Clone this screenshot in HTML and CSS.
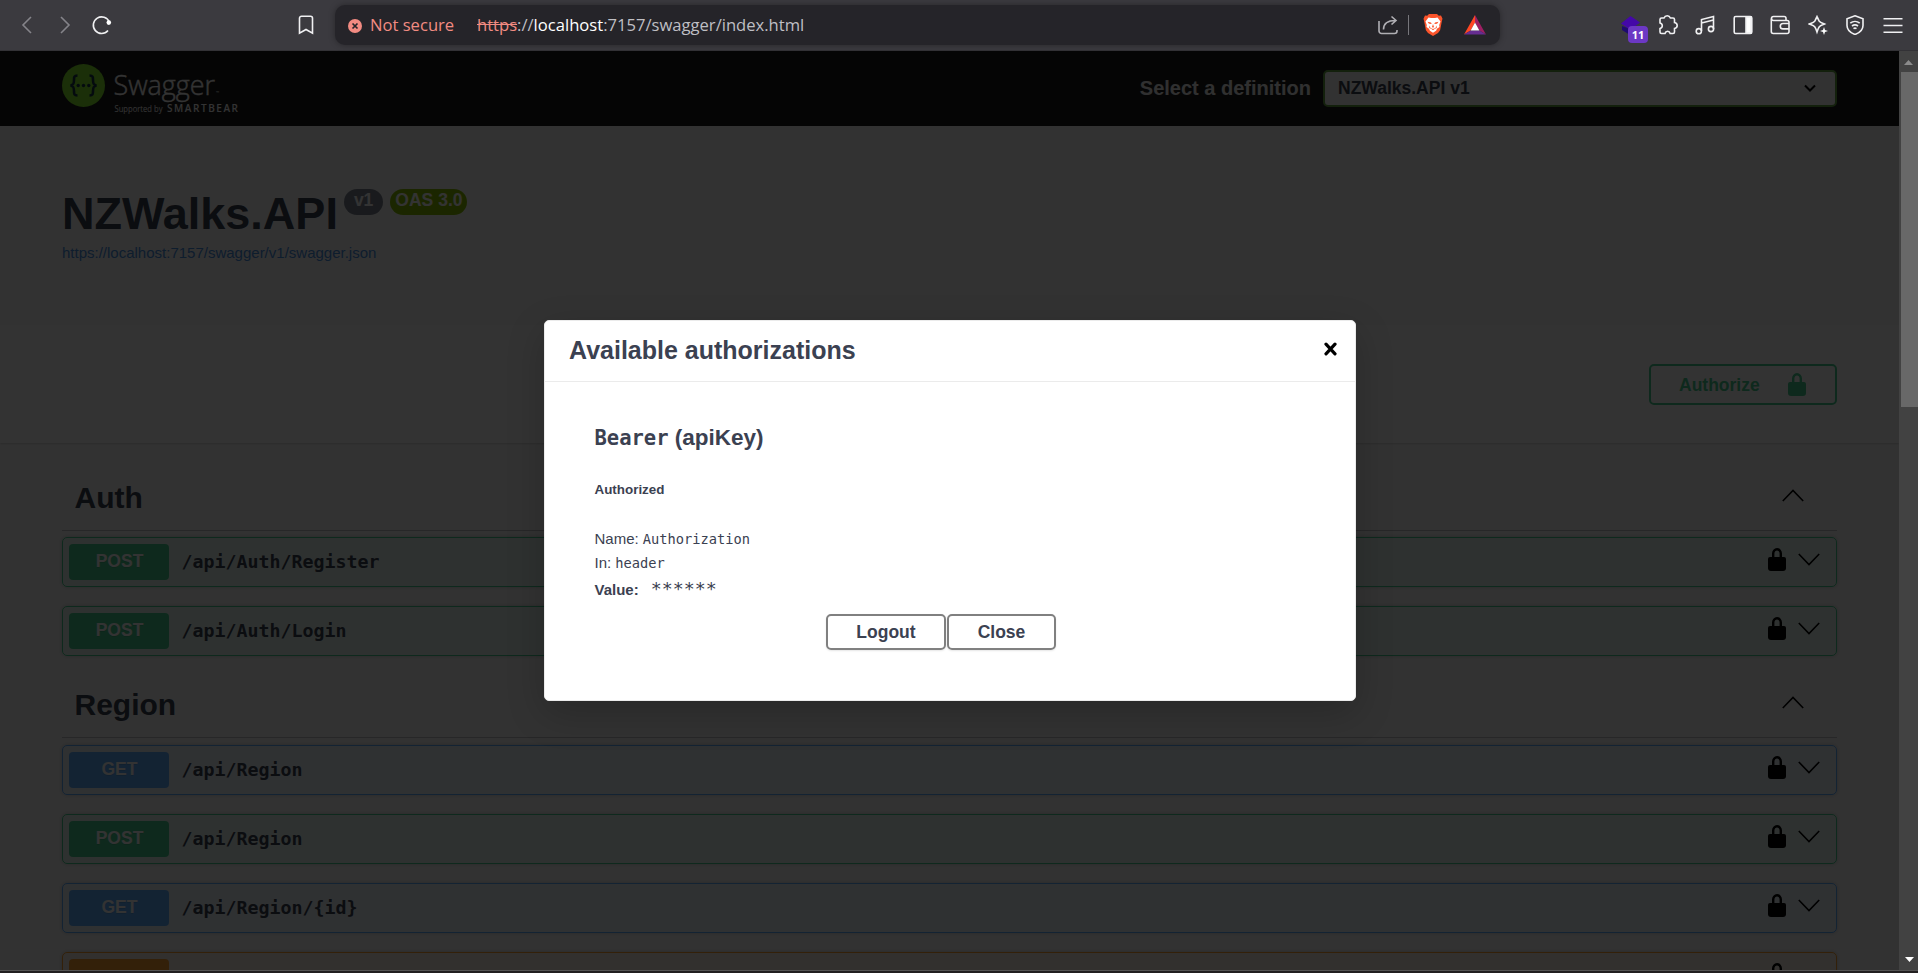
FILE: index.html
```html
<!DOCTYPE html>
<html lang="en">
<head>
<meta charset="utf-8">
<title>Swagger UI</title>
<link rel="stylesheet" href="styles.css">
</head>
<body>
<svg class="defs" width="0" height="0" aria-hidden="true">
  <symbol id="lock" viewBox="0 0 18 23"><path d="M2 9h14a2 2 0 0 1 2 2v9a3 3 0 0 1-3 3H3a3 3 0 0 1-3-3v-9a2 2 0 0 1 2-2z"/><path d="M5.2 9.500V5.500a3.800 4.300 0 0 1 7.600 0v4" fill="none" stroke="currentColor" stroke-width="2.400"/></symbol>
  <symbol id="down" viewBox="0 0 22 13"><path d="M.8 1 11 11.500 21.200 1" fill="none" stroke="currentColor" stroke-width="1.600"/></symbol>
  <symbol id="up" viewBox="0 0 22 13"><path d="M.8 12 11 1.500 21.200 12" fill="none" stroke="currentColor" stroke-width="1.600"/></symbol>
</svg>
<div class="browser">
  <header class="toolbar">
    <div class="nav">
      <svg class="dim" width="12" height="20" viewBox="0 0 12 20"><path d="M10 2 2 10l8 8"/></svg>
      <svg class="dim" width="12" height="20" viewBox="0 0 12 20"><path d="M2 2l8 8-8 8"/></svg>
      <svg width="20" height="20" viewBox="0 0 20 20"><path d="M16 15.500A8.300 8.300 0 1 1 17.300 7"/><circle cx="16.800" cy="7.600" r="2.300" fill="#fff" stroke="none"/></svg>
    </div>
    <svg class="bookmark" width="16" height="20" viewBox="0 0 16 20"><path d="M3.500 1.200h9a2 2 0 0 1 2 2V18.200L8 14.500l-6.500 3.700V3.200a2 2 0 0 1 2-2z"/></svg>
    <div class="address">
      <svg class="warn" width="14" height="14" viewBox="0 0 14 14"><circle cx="7" cy="7" r="7" fill="#f28b82"/><path d="M4.500 4.500l5 5m0-5l-5 5" stroke="#26252a" stroke-width="1.700"/></svg>
      <span class="insecure">Not secure</span>
      <span class="url"><s>https</s>://<b>localhost</b>:7157/swagger/index.html</span>
      <div class="address-tools">
        <svg class="share" width="20" height="20" viewBox="0 0 20 20"><path d="M1 6v10a2.500 2.500 0 0 0 2.500 2.500h13A2.500 2.500 0 0 0 19 16v-1M5.500 14.500c0-6 4-9 12-9M13.500 1.500l4.500 4-4.500 4"/></svg>
        <i class="sep"></i>
        <svg class="brave" width="20" height="24" viewBox="0 0 20 24"><path d="M6 1h8l1.800 1.700L18 2.500l1.500 3.200-.6 2.300-1.800 9.200L15 20l-5 3-5-3-2.100-2.800L1.100 8 .5 5.700 2 2.500l2.200.2z" fill="#fb542b"/><path d="M5.500 4.500 8 5h4l2.500-.5 3 4-1.300 3.500.3 2-2.500 1.700-.9 2L10 19.800l-3.100-2.100-.9-2L3.500 14l.3-2L2.500 8.500z" fill="#fff"/><path d="M4.500 8.800l3.500.6.7 1.700-2.700-.3zM15.500 8.800l-3.500.6-.7 1.700 2.700-.3zM10 11l1 3-1 .8-1-.8zM6.500 12.500l1 2.500L10 16l2.500-1 1-2.500.3 2.500-2.300 1-1.500 1.300L8.500 16l-2.300-1z" fill="#fb542b"/></svg>
        <svg class="bat" width="22" height="20" viewBox="0 0 22 20"><path d="M11 0 0 19.500l6.600-4L11 7.500z" fill="#ff4724"/><path d="M11 0v7.500l4.400 8 6.600 4z" fill="#9e1f63"/><path d="M0 19.500h22l-6.600-4H6.600z" fill="#662d91"/><path d="M11 7.500l-4.400 8h8.800z" fill="#fff"/></svg>
      </div>
    </div>
    <div class="actions">
      <div class="extension">
        <svg width="22" height="22" viewBox="0 0 22 22"><path d="M2 11v4l8 5V14z" fill="#1e0a70" stroke="none"/><path d="M10.500 1 20 7.500 10.500 15 1 8.500z" fill="#4408a8" stroke="none"/></svg>
        <span class="count">11</span>
      </div>
      <svg width="20" height="20" viewBox="0 0 20 20"><path d="M3.500 3H6c.6-1.500 1.800-2.200 3.200-2.200S11.800 1.500 12.400 3H15a1.500 1.500 0 0 1 1.500 1.500v3c1.700.4 2.700 1.500 2.700 3s-1 2.700-2.700 3V17a1.500 1.500 0 0 1-1.500 1.500h-2.800c-.4-1.500-1.300-2.200-2.600-2.200S7.400 17 7 18.500H3.500A1.500 1.500 0 0 1 2 17v-3.500c1.500-.4 2.300-1.300 2.300-2.700S3.500 8.400 2 8V4.500A1.500 1.500 0 0 1 3.500 3z"/></svg>
      <svg width="20" height="20" viewBox="0 0 20 20"><circle cx="3.800" cy="16.200" r="2.600"/><circle cx="16" cy="14" r="2.600"/><path d="M6.500 16V4.500l12-3V14M6.500 8l12-3"/></svg>
      <svg width="20" height="20" viewBox="0 0 20 20"><rect x="1.200" y="1.500" width="17.600" height="17" rx="1.500"/><path d="M13 2h5v16h-5z" fill="#fff"/></svg>
      <svg width="20" height="20" viewBox="0 0 20 20"><path d="M16 5.500V3.300a1.800 1.800 0 0 0-1.800-1.800H3.500a2 2 0 0 0 0 4h13.700A1.800 1.800 0 0 1 19 7.300v9.400a1.800 1.800 0 0 1-1.800 1.800H3.300a2 2 0 0 1-2-2V3.500M19 8.500h-6a2.700 2.700 0 0 0 0 5.400h6"/></svg>
      <svg width="20" height="20" viewBox="0 0 20 20"><path d="M9 1.500c.5 1 1.200 3.200 2.300 4.700 1.200 1.300 3.500 2 5.200 2.800-1.700.8-4 1.500-5.200 2.800C10.200 13.300 9.500 15.500 9 17c-.5-1.500-1.200-3.700-2.300-5.200C5.500 10.500 3 9.800 1.200 9 3 8.200 5.500 7.500 6.700 6.200 7.800 4.700 8.500 2.500 9 1.500z"/><path d="M16 12l1 3 3 1-3 1-1 3-1-3-3-1 3-1z" fill="#fff" stroke="none"/></svg>
      <svg width="20" height="20" viewBox="-1 0 20 20"><path d="M9 .8l8 3v6.700c0 4.500-4 7.500-8 9-4-1.500-8-4.500-8-9V3.800z"/><path d="M4.300 8.200c2.700-2.200 6.700-2.200 9.400 0M6 11c1.800-1.400 4.200-1.400 6 0M7.500 13.600c1-.7 2-.7 3 0"/></svg>
      <svg width="20" height="20" viewBox="0 0 20 20"><path d="M.5 3.800h19M.5 10.500h19M.5 17.200h19"/></svg>
    </div>
  </header>

  <div class="viewport">
    <main class="page">
      <div class="topbar">
        <svg class="logo" width="180" height="52" viewBox="0 0 180 52">
          <circle cx="21.500" cy="21.500" r="21.500" fill="#85ea2d"/>
          <g fill="none" stroke="#173647" stroke-width="2.600"><path d="M15.500 11.500c-3.500 0-3.500 1.500-3.500 4.500 0 3.500-.5 5-3.500 5.500 3 .5 3.500 2 3.500 5.500 0 3 0 4.500 3.500 4.500M27.500 11.500c3.500 0 3.500 1.500 3.500 4.500 0 3.500.5 5 3.500 5.500-3 .5-3.500 2-3.500 5.500 0 3 0 4.500-3.500 4.500"/></g>
          <g fill="#173647"><circle cx="16.200" cy="21.500" r="1.700"/><circle cx="21.500" cy="21.500" r="1.700"/><circle cx="26.800" cy="21.500" r="1.700"/></g>
          <text class="logo-name" x="51.500" y="30.500" textLength="101.500" lengthAdjust="spacingAndGlyphs">Swagger</text>
          <text class="logo-tm" x="154" y="30">™</text>
          <text class="logo-by" x="52.500" y="48" textLength="48" lengthAdjust="spacingAndGlyphs">Supported by</text>
          <text class="logo-co" x="105" y="48" textLength="71">SMARTBEAR</text>
        </svg>
        <label class="definition"><span>Select a definition</span>
          <span class="select">NZWalks.API v1<svg width="12" height="9" viewBox="0 0 12 9"><path d="M1 1.500l5 5 5-5" fill="none" stroke="#000" stroke-width="2"/></svg></span>
        </label>
      </div>
      <section class="info">
        <h1>NZWalks.API<span class="badges"><span class="badge">v1</span><span class="badge oas">OAS 3.0</span></span></h1>
        <a class="spec">https://localhost:7157/swagger/v1/swagger.json</a>
      </section>
      <section class="scheme">
        <div class="authorize"><span>Authorize</span><svg width="18" height="23"><use href="#lock"/></svg></div>
      </section>
      <section class="tag">
        <h2>Auth<svg width="22" height="13"><use href="#up"/></svg></h2>
        <div class="op post"><span class="method">POST</span><code>/api/Auth/Register</code><svg class="lock" width="18" height="23"><use href="#lock"/></svg><svg class="arrow" width="22" height="13"><use href="#down"/></svg></div>
        <div class="op post"><span class="method">POST</span><code>/api/Auth/Login</code><svg class="lock" width="18" height="23"><use href="#lock"/></svg><svg class="arrow" width="22" height="13"><use href="#down"/></svg></div>
      </section>
      <section class="tag">
        <h2>Region<svg width="22" height="13"><use href="#up"/></svg></h2>
        <div class="op get"><span class="method">GET</span><code>/api/Region</code><svg class="lock" width="18" height="23"><use href="#lock"/></svg><svg class="arrow" width="22" height="13"><use href="#down"/></svg></div>
        <div class="op post"><span class="method">POST</span><code>/api/Region</code><svg class="lock" width="18" height="23"><use href="#lock"/></svg><svg class="arrow" width="22" height="13"><use href="#down"/></svg></div>
        <div class="op get"><span class="method">GET</span><code>/api/Region/{id}</code><svg class="lock" width="18" height="23"><use href="#lock"/></svg><svg class="arrow" width="22" height="13"><use href="#down"/></svg></div>
        <div class="op put"><span class="method"></span><svg class="lock" width="18" height="23"><use href="#lock"/></svg></div>
      </section>

      <div class="backdrop">
        <div class="modal">
          <div class="modal-head"><h3>Available authorizations</h3>
            <svg width="13" height="14" viewBox="0 0 13 14"><path d="M2 2.200l9 9.600M11 2.200l-9 9.600" stroke="#000" stroke-width="3.200" stroke-linecap="round"/></svg>
          </div>
          <div class="modal-body">
            <h4><code>Bearer</code> (apiKey)</h4>
            <h6>Authorized</h6>
            <p>Name: <code>Authorization</code></p>
            <p>In: <code>header</code></p>
            <p class="value"><b>Value:</b><code>******</code></p>
            <div class="buttons"><span class="btn logout">Logout</span><span class="btn close">Close</span></div>
          </div>
        </div>
      </div>
    </main>
    <div class="scrollbar">
      <svg width="9" height="5" viewBox="0 0 9 5"><path d="M0 5 4.500 0 9 5z" fill="#8b8b8b"/></svg>
      <i class="thumb"></i>
      <svg class="end" width="9" height="5" viewBox="0 0 9 5"><path d="M0 0l4.500 5L9 0z" fill="#fff"/></svg>
    </div>
  </div>
  <div class="edge"></div>
</div>
</body>
</html>
```
FILE: styles.css
```css
* { box-sizing: border-box; }
body { margin: 0; font-family: "Liberation Sans", Arial, sans-serif; color: #3b4151; overflow: hidden; }
h1, h2, h3, h4, h6, p { margin: 0; }
svg { display: block; flex: none; }
.defs { position: absolute; }
.browser { width: 1918px; height: 973px; display: flex; flex-direction: column; }

/* Browser toolbar */
.toolbar { height: 51px; flex: none; display: flex; background: #3b3a3f; border-bottom: 1px solid #333236; padding: 0 15.500px 0 22px; }
.toolbar svg { fill: none; stroke: #f0f0f2; stroke-width: 1.6; }
.nav { display: flex; gap: 26px; padding-top: 15px; width: 276px; }
.nav svg:first-child { margin-left: -1px; }
.nav svg:last-child { margin-left: -5px; }
.toolbar .dim { stroke: #85848a; }
.bookmark { margin-top: 15px; }
.address { width: 1165px; height: 40px; margin: 5px 0 0 21px; padding: 0 14px 0 13px; display: flex; flex: none; align-items: center; background: #252429; border-radius: 10px; box-shadow: 0 0 6px rgba(0,0,0,.35); font: 16.600px/40px "Open Sans", "Noto Sans", sans-serif; white-space: nowrap; }
.toolbar .warn { stroke: none; margin-top: 1px; }
.insecure { color: #f28b82; margin-left: 8px; width: 107px; }
.url { color: #bfbfc4; }
.url b { color: #fff; font-weight: 400; }
.url s { color: #f28b82; }
.address-tools { display: flex; align-items: center; margin-left: auto; }
.toolbar .share { stroke: #b0afb4; }
.sep { width: 1.500px; height: 20px; margin: 0 14px 0 10px; background: #77767b; }
.toolbar .brave, .toolbar .bat { stroke: none; }
.bat { margin-left: 21px; }
.actions { display: flex; margin-left: auto; gap: 17.500px; padding-top: 15px; }
.extension { position: relative; width: 22px; margin-right: -2px; }
.count { position: absolute; left: 8px; top: 11px; width: 20px; height: 17px; border-radius: 4px; background: #6c38c4; color: #fff; font: bold 11px/18px "Open Sans", sans-serif; text-align: center; }

/* Page */
.viewport { height: 919px; display: flex; position: relative; overflow: hidden; }
.page { width: 1899px; height: 919px; background: #fafafa; position: relative; overflow: hidden; }
.edge { height: 3px; background: #221f20; border-top: 1px solid #545353; }
.topbar { height: 75px; background: #1b1b1b; padding: 0 62px; display: flex; justify-content: space-between; }
.logo { margin-top: 13px; }
.logo text { fill: #fff; font-family: "Open Sans", sans-serif; }
.logo .logo-name { font-size: 27px; font-weight: 300; stroke: #fff; stroke-width: .4; }
.logo .logo-tm { font-size: 4px; }
.logo .logo-by { font-size: 8.500px; }
.logo .logo-co { font-size: 10px; font-weight: 600; }
.definition { display: flex; align-items: center; gap: 12px; color: #f0f0f0; font: bold 20px/37px "Liberation Sans", sans-serif; }
.select { width: 514px; height: 37px; border: 2.500px solid #62a03f; border-radius: 5px; background: #f7f7f7; color: #3b4151; font-size: 17.500px; line-height: 31px; padding: 0 19px 0 13px; display: flex; justify-content: space-between; align-items: center; }
.info { height: 199px; padding: 62px 62px 0; }
h1 { font-size: 45px; line-height: 52px; display: flex; }
.badges { display: flex; gap: 7px; margin: 1px 0 0 6px; height: 26px; }
.badge { height: 26px; padding: 0 10px; border-radius: 30px; background: #7d8492; color: #fff; font-size: 17.500px; line-height: 23px; }
.badge.oas { background: #89bf04; padding: 0 5px; }
.spec { display: block; color: #4990e2; font-size: 15px; line-height: 17px; margin-top: 4px; }
.scheme { height: 118px; background: #fff; box-shadow: 0 1px 2px rgba(0,0,0,.15); padding: 39px 62px 0; display: flex; justify-content: flex-end; }
.authorize { width: 188px; height: 41px; border: 2px solid #49cc90; border-radius: 5px; color: #49cc90; fill: #49cc90; display: flex; justify-content: space-between; align-items: center; padding: 0 29px 0 28px; font: bold 17.500px/36px "Liberation Sans", sans-serif; }
.authorize svg { margin-top: -1px; }
.tag { padding: 0 62px; }
.tag:nth-of-type(3) { padding-top: 25px; }
h2 { height: 63px; border-bottom: 1px solid rgba(59,65,81,.3); padding: 0 34px 2px 12.500px; font-size: 30px; line-height: 60px; display: flex; justify-content: space-between; align-items: center; margin-bottom: 6px; color: #3b4151; }
h2 svg { color: #000; margin: -5px -1px 0 0; }
.op { height: 50px; margin-bottom: 19px; border: 1px solid; border-radius: 5px; display: flex; align-items: center; padding: 0 16px 0 6px; box-shadow: 0 0 4px rgba(0,0,0,.19); }
.post { border-color: #49cc90; background: rgba(73,204,144,.1); }
.get { border-color: #61affe; background: rgba(97,175,254,.1); }
.put { border-color: #fca130; background: rgba(252,161,48,.1); }
.tag:nth-of-type(4) h2 { margin-bottom: 7px; }
.method { width: 100px; height: 36px; border-radius: 4px; color: #fff; font-weight: 700; font-size: 17.500px; line-height: 34px; text-align: center; text-indent: 1px; text-shadow: 0 1px 0 rgba(0,0,0,.1); }
.post .method { background: #49cc90; }
.get .method { background: #61affe; }
.put .method { background: #fca130; }
code { font-family: "DejaVu Sans Mono", "Liberation Mono", monospace; }
.op code { margin: -2px 0 0 12.500px; font-size: 18.270px; font-weight: 700; }
.lock { margin: -5px 12px 0 auto; color: #000; }
.put .lock { margin-right: 34px; }
.arrow { margin-top: -5px; color: #000; }

/* Dialog */
.backdrop { position: absolute; inset: 0; background: rgba(0,0,0,.8); display: flex; justify-content: center; align-items: flex-start; padding-top: 269px; }
.modal { width: 812px; height: 381px; background: #fff; border: 1px solid #ebebeb; border-radius: 5px; box-shadow: 0 12px 38px rgba(0,0,0,.2); margin-left: 1px; }
.modal-head { height: 61px; border-bottom: 1px solid #ebebeb; padding: 0 18px 0 24px; display: flex; justify-content: space-between; align-items: center; }
.modal-head svg { margin-top: -5px; }
h3 { font-size: 25px; line-height: 56px; margin-top: -2px; }
.modal-body { padding: 42px 49.500px 0; }
h4 { font-size: 22.500px; line-height: 28px; }
h4 code { font-size: 20.500px; }
h6 { font-size: 13.400px; line-height: 16px; margin: 30px 0 29px; }
p { font-size: 15px; line-height: 24px; }
p code { font-size: 13.700px; }
.value { line-height: 30px; display: flex; }
.value code { font-size: 18.270px; margin: -1px 0 0 12px; }
.buttons { display: flex; margin: 9px 0 0 231.500px; gap: 1px; }
.btn { height: 36px; border: 2px solid gray; border-radius: 5px; box-shadow: 0 1px 2px rgba(0,0,0,.1); font-weight: 700; font-size: 17.500px; line-height: 32px; text-align: center; }
.logout { width: 120px; }
.close { width: 109px; }

/* Scrollbar */
.scrollbar { width: 19px; background: #424242; display: flex; flex-direction: column; align-items: center; padding-top: 9px; }
.thumb { width: 17px; height: 335px; margin: 7px 0 0 2px; background: #686868; }
.end { margin: auto 0 8px 2px; }
```
